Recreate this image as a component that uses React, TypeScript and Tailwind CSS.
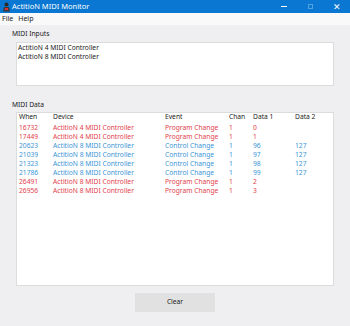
import React from "react";

type Row = { when: string; device: string; event: string; chan: string; d1: string; d2: string; kind: "pc" | "cc" };

const rows: Row[] = [
  { when: "16732", device: "ActitioN 4 MIDI Controller", event: "Program Change", chan: "1", d1: "0", d2: "", kind: "pc" },
  { when: "17449", device: "ActitioN 4 MIDI Controller", event: "Program Change", chan: "1", d1: "1", d2: "", kind: "pc" },
  { when: "20623", device: "ActitioN 8 MIDI Controller", event: "Control Change", chan: "1", d1: "96", d2: "127", kind: "cc" },
  { when: "21039", device: "ActitioN 8 MIDI Controller", event: "Control Change", chan: "1", d1: "97", d2: "127", kind: "cc" },
  { when: "21323", device: "ActitioN 8 MIDI Controller", event: "Control Change", chan: "1", d1: "98", d2: "127", kind: "cc" },
  { when: "21786", device: "ActitioN 8 MIDI Controller", event: "Control Change", chan: "1", d1: "99", d2: "127", kind: "cc" },
  { when: "26491", device: "ActitioN 8 MIDI Controller", event: "Program Change", chan: "1", d1: "2", d2: "", kind: "pc" },
  { when: "26956", device: "ActitioN 8 MIDI Controller", event: "Program Change", chan: "1", d1: "3", d2: "", kind: "pc" },
];

function Cells({ r, className }: { r: Omit<Row, "kind">; className: string }) {
  return (
    <div className={`flex h-[9px] items-center leading-none ${className}`}>
      <span className="w-[34px] shrink-0">{r.when}</span>
      <span className="w-[112px] shrink-0">{r.device}</span>
      <span className="w-[64px] shrink-0">{r.event}</span>
      <span className="w-[24px] shrink-0">{r.chan}</span>
      <span className="w-[42px] shrink-0">{r.d1}</span>
      <span>{r.d2}</span>
    </div>
  );
}

export default function App() {
  return (
    <div
      className="w-[350px] h-[326px] bg-[#efeef1] flex flex-col overflow-hidden text-[6.7px] text-[#1a1a1a]"
      style={{ fontFamily: '"Noto Sans", "Open Sans", sans-serif' }}
    >
      {/* title bar */}
      <div className="h-[13px] bg-[#0a77d2] flex items-center text-white shrink-0">
        <svg width="9" height="10" viewBox="0 0 9 10" className="ml-[2px]">
          <circle cx="4.5" cy="2.5" r="2" fill="#2b2b2b" />
          <path d="M1 9.5 L2 5 L7 5 L8 9.5 Z" fill="#3a3a3a" />
          <rect x="3" y="6" width="3" height="2" fill="#d33" />
        </svg>
        <span className="ml-[1px] text-[7.5px]">ActitioN MIDI Monitor</span>
        <div className="ml-auto flex items-center h-full">
          <span className="w-[24px] flex justify-center">
            <span className="block w-[6px] h-px bg-white" />
          </span>
          <span className="w-[28px] flex justify-center">
            <span className="block w-[5px] h-[5px] border border-white/30" />
          </span>
          <span className="w-[26px] flex justify-center text-[9px] leading-none">✕</span>
        </div>
      </div>
      {/* menu bar */}
      <div className="h-[12px] bg-[#f9f9f9] flex items-center gap-[5px] pl-[2px] shrink-0 text-[7px]">
        <span>File</span>
        <span>Help</span>
      </div>

      <div className="flex-1 flex flex-col px-[10px]">
        <div className="mt-[3px] pl-[2px] h-[12px] flex items-center">MIDI Inputs</div>
        <div className="mx-[6px] mt-[2px] h-[44px] bg-white border border-[#dcdcdc] px-[1px]">
          <div className="h-[9.5px] flex items-center">ActitioN 4 MIDI Controller</div>
          <div className="h-[9.5px] flex items-center">ActitioN 8 MIDI Controller</div>
        </div>

        <div className="mt-[13px] pl-[2px] h-[12px] flex items-center">MIDI Data</div>
        <div className="mx-[6px] mt-[1px] h-[174px] bg-white border border-[#dcdcdc] px-[2px]">
          <Cells
            className="text-[#222]"
            r={{ when: "When", device: "Device", event: "Event", chan: "Chan", d1: "Data 1", d2: "Data 2" }}
          />
          <div className="h-[1.5px]" />
          {rows.map((r) => (
            <Cells key={r.when} r={r} className={r.kind === "pc" ? "text-[#e2414b]" : "text-[#3b95d6]"} />
          ))}
        </div>

        <div className="flex justify-center mt-[7px]">
          <button className="w-[80px] h-[19px] bg-[#e1e1e1] text-[#222] flex items-center justify-center">
            Clear
          </button>
        </div>
      </div>
    </div>
  );
}
